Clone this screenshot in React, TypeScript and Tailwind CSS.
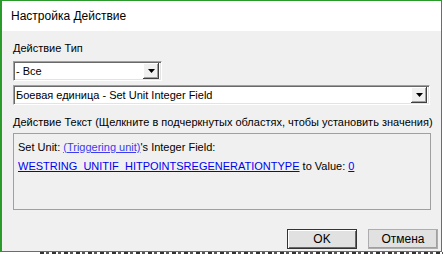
import React from 'react';

const font = "font-['Liberation_Sans',Arial,sans-serif]";

const Arrow: React.FC = () => (
    <div className="w-[16px] h-[16px] bg-[#f0f0f0] flex items-center justify-center shadow-[inset_-1px_-1px_0_#404040,inset_1px_1px_0_#ffffff,inset_-2px_-2px_0_#a0a0a0]">
        <svg width="7" height="4" viewBox="0 0 7 4">
            <path d="M0 0h7L3.5 4z" fill="#000" />
        </svg>
    </div>
);

const Combo: React.FC<{ text: string; className: string }> = ({ text, className }) => (
    <div className={`h-[20px] bg-white flex items-center justify-between border border-[#a0a0a0] border-b-white border-r-white shadow-[inset_1px_1px_0_#696969,inset_-1px_-1px_0_#e3e3e3] pl-[2px] pr-[2px] ${className}`}>
        <span className="text-[11px] leading-[13px] text-black whitespace-nowrap">{text}</span>
        <Arrow />
    </div>
);

export default function App() {
    return (
        <div className={`w-[443px] h-[254px] bg-white overflow-hidden ${font}`}>
            {/* Dialog */}
            <div className="w-[442px] h-[252px] border border-[#2a9a2a] border-l-2 flex flex-col">
                {/* Title bar */}
                <div className="h-[30px] bg-white flex items-center pl-[9px]">
                    <span className="text-[12px] text-black">Настройка Действие</span>
                </div>

                {/* Body */}
                <div className="flex-1 bg-[#f0f0f0] flex flex-col pl-[11px] pr-[3px] pt-[11px]">
                    <div className="text-[11px] leading-[13px] text-black">Действие Тип</div>
                    <Combo text="- Все" className="w-[149px] mt-[6px]" />
                    <Combo text="Боевая единица - Set Unit Integer Field" className="w-[417px] mt-[4px]" />
                    <div className="text-[11px] leading-[13px] text-black mt-[11px] whitespace-nowrap">
                        Действие Текст (Щелкните в подчеркнутых областях, чтобы установить значения)
                    </div>

                    {/* Action text */}
                    <div className="w-[418px] h-[77px] mt-[4px] border border-[#a0a0a0] px-[4px] pt-[4px] text-[11px] leading-[19px] text-black">
                        <div className="whitespace-nowrap">
                            Set Unit: <span className="text-[#3c3cf0] underline">(Triggering unit)</span>'s Integer Field:
                        </div>
                        <div className="whitespace-nowrap">
                            <span className="text-[#0000f0] underline">WESTRING_UNITIF_HITPOINTSREGENERATIONTYPE</span> to Value: <span className="text-[#0000f0] underline">0</span>
                        </div>
                    </div>

                    {/* Buttons */}
                    <div className="flex justify-end gap-[11px] mt-[19px]">
                        <button className="w-[70px] h-[20px] bg-[#e1e1e1] border border-[#333] shadow-[inset_1px_1px_0_#ffffff,inset_-1px_-1px_0_#696969] text-[12px] leading-[14px] text-black">
                            OK
                        </button>
                        <button className="w-[70px] h-[20px] bg-[#e1e1e1] border border-[#adadad] shadow-[inset_-1px_-1px_0_#a0a0a0] text-[12px] leading-[14px] text-black">
                            Отмена
                        </button>
                    </div>
                </div>
            </div>
            {/* Window behind, only a sliver shows */}
            <div className="h-[2px] ml-[40px] bg-[repeating-linear-gradient(90deg,#333_0_4px,#fff_4px_6px,#555_6px_9px,#fff_9px_12px)]" />
        </div>
    );
}
